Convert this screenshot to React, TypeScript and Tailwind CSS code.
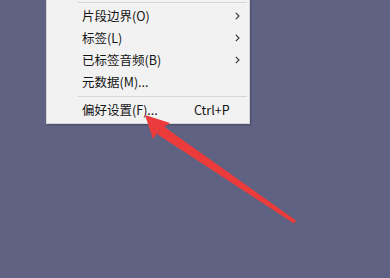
import React from 'react';

type Item = { label: string; sub?: boolean; shortcut?: string };

const topItems: Item[] = [
  { label: '片段边界(O)', sub: true },
  { label: '标签(L)', sub: true },
  { label: '已标签音频(B)', sub: true },
  { label: '元数据(M)...' },
];

const Chevron = () => (
  <svg width="5" height="8" viewBox="0 0 5 8" className="absolute left-[188px]">
    <path d="M0.8 0.8 L4 4 L0.8 7.2" fill="none" stroke="#333" strokeWidth="1.1" />
  </svg>
);

const Row = ({ item }: { item: Item }) => (
  <div className="relative flex h-[22px] items-center pl-[35px] text-[12.5px] text-[#141414]">
    <span>{item.label}</span>
    {item.sub && <Chevron />}
    {item.shortcut && <span className="absolute left-[147px]">{item.shortcut}</span>}
  </div>
);

export default function App() {
  return (
    <div
      className="relative h-[278px] w-[390px] overflow-hidden bg-[#5f6283]"
      style={{ fontFamily: '"Noto Sans CJK SC", "Noto Sans", sans-serif' }}
    >
      {/* menu popup */}
      <div className="ml-[46px] w-[204px] border-r border-b border-l border-[#d4d4d8] bg-[#f2f2f2] pt-[2px] pb-[2px] shadow-[1px_1px_2px_rgba(0,0,0,0.25)]">
        <div className="ml-[31px] mr-[2px] h-px bg-[#d6d6d6]" />
        <div className="pt-[2px]">
          {topItems.map((it) => (
            <Row key={it.label} item={it} />
          ))}
        </div>
        <div className="flex h-[6px] items-center">
          <div className="ml-[31px] mr-[2px] h-px w-full bg-[#d6d6d6]" />
        </div>
        <Row item={{ label: '偏好设置(F)...', shortcut: 'Ctrl+P' }} />
      </div>

      {/* red annotation arrow */}
      <svg className="absolute left-0 top-0" width="390" height="278" viewBox="0 0 390 278">
        <defs>
          <filter id="blur" x="-10%" y="-10%" width="120%" height="120%">
            <feGaussianBlur stdDeviation="0.7" />
          </filter>
        </defs>
        <g filter="url(#blur)" fill="#ec3b3b">
          <path d="M163 126 L296 220.5 L294 223.5 L157 134 Z" />
          <path d="M145 115 L170 123 L164 127 L158 132 L153 139 Z" />
        </g>
      </svg>
    </div>
  );
}
